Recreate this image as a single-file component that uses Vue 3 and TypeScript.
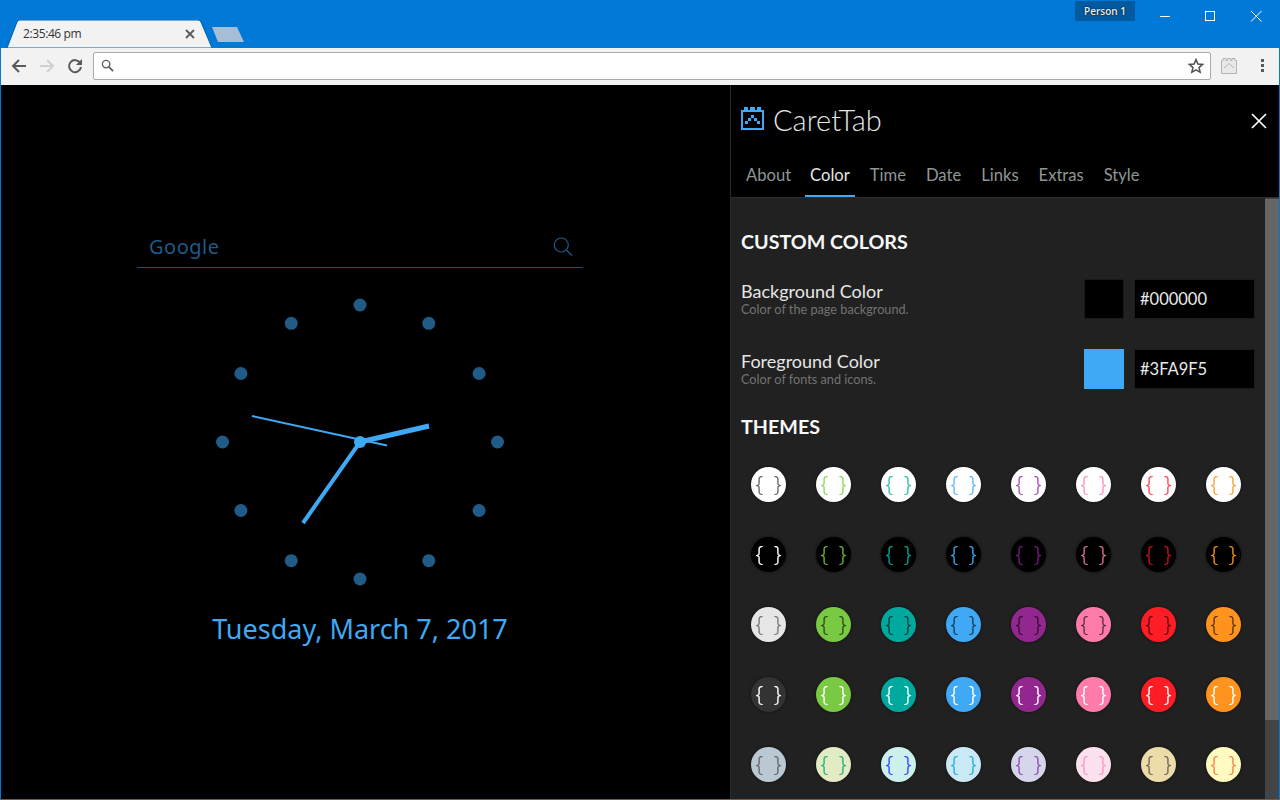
<script setup lang="ts">
const tabs = ['About', 'Color', 'Time', 'Date', 'Links', 'Extras', 'Style']

const dots = Array.from({ length: 12 }, (_, i) => {
  const a = (i * Math.PI) / 6
  return { x: 150 + 137.5 * Math.sin(a), y: 150 - 137 * Math.cos(a) }
})

const brights = ['#e6e6e6', '#7ac943', '#00a99d', '#3fa9f5', '#93278f', '#ff7bac', '#ff1d25', '#ff931e']

interface Theme { bg: string; fg: string }

const themes: Theme[] = [
  ...['#666666', '#8cd860', '#2dbfae', '#5fb8fa', '#a64db5', '#ff8fc2', '#ff4352', '#ffa133'].map((fg) => ({ bg: '#ffffff', fg })),
  ...['#ffffff', '#6cbb3c', '#00a99d', '#3fa9f5', '#7a1f80', '#e0709c', '#d3121c', '#f7931e'].map((fg) => ({ bg: '#000000', fg })),
  ...brights.map((bg) => ({ bg, fg: bg === '#e6e6e6' ? '#777777' : 'rgba(0,0,0,.62)' })),
  ...['#333333', ...brights.slice(1)].map((bg) => ({ bg, fg: '#ffffff' })),
  { bg: '#b9c8d2', fg: '#666666' },
  { bg: '#e2ebc3', fg: '#22b573' },
  { bg: '#ccf1ec', fg: '#3344ff' },
  { bg: '#c9e9f4', fg: '#29abe2' },
  { bg: '#d5d5eb', fg: '#8a50b0' },
  { bg: '#fbe0ee', fg: '#f79ac0' },
  { bg: '#ecdcaa', fg: '#736357' },
  { bg: '#fffabf', fg: '#f98050' },
]
</script>

<template>
  <div class="window">
    <header class="titlebar">
      <div class="tab">
        <svg class="tab-shape" width="205" height="28" viewBox="0 0 205 28">
          <path d="M0 28 L10 2 Q11 0 13 0 L191 0 Q193 0 194 2 L205 28 Z" fill="#f2f2f2" stroke="#0060ac" stroke-width="1" />
        </svg>
        <span class="tab-title">2:35:46 pm</span>
        <svg class="tab-close" width="10" height="10" viewBox="0 0 10 10">
          <path d="M1 1 L9 9 M9 1 L1 9" stroke="#5a5a5a" stroke-width="1.8" fill="none" />
        </svg>
      </div>
      <svg class="newtab" width="33" height="16" viewBox="0 0 33 16">
        <path d="M0 0 H25 L32 15 H6 Z" fill="#a5bed6" />
      </svg>
      <div class="title-spacer"></div>
      <div class="person">Person 1</div>
      <div class="winctl">
        <svg width="46" height="30" viewBox="0 0 46 30"><path d="M19 15.5 H29" stroke="#fff" fill="none" /></svg>
        <svg width="46" height="30" viewBox="0 0 46 30"><rect x="18.5" y="10.5" width="9" height="9" stroke="#fff" fill="none" /></svg>
        <svg width="46" height="30" viewBox="0 0 46 30"><path d="M18 10 L28.5 20.5 M28.5 10 L18 20.5" stroke="#fff" fill="none" /></svg>
      </div>
    </header>

    <div class="toolbar">
      <div class="tb-btn">
        <svg width="16" height="16" viewBox="0 0 16 16"><path d="M15 8 H2 M8 2 L2 8 L8 14" stroke="#5a5a5a" stroke-width="2" fill="none" /></svg>
      </div>
      <div class="tb-btn">
        <svg width="16" height="16" viewBox="0 0 16 16"><path d="M1 8 H14 M8 2 L14 8 L8 14" stroke="#d0d0d0" stroke-width="2" fill="none" /></svg>
      </div>
      <div class="tb-btn">
        <svg width="16" height="16" viewBox="0 0 16 16">
          <path d="M13.2 5 A6 6 0 1 0 14 9" stroke="#5a5a5a" stroke-width="2" fill="none" />
          <path d="M15 1 V7 H9 Z" fill="#5a5a5a" />
        </svg>
      </div>
      <div class="omnibox">
        <svg width="13" height="13" viewBox="0 0 14 14">
          <circle cx="5.5" cy="5.5" r="4" stroke="#5f5f5f" stroke-width="1.5" fill="none" />
          <path d="M8.5 8.5 L13 13" stroke="#5f5f5f" stroke-width="2" fill="none" />
        </svg>
        <div class="omni-spacer"></div>
        <svg width="16" height="16" viewBox="0 0 16 16">
          <path d="M8 1.6 L9.9 6 L14.7 6.4 L11 9.6 L12.2 14.3 L8 11.8 L3.8 14.3 L5 9.6 L1.3 6.4 L6.1 6 Z" stroke="#505050" stroke-width="1.5" fill="none" />
        </svg>
      </div>
      <div class="tb-ext">
        <svg width="16" height="16" viewBox="0 0 16 16">
          <path d="M.5 2.5 H2 V.5 H5 V2.5 H6.5 V.5 H9.5 V2.5 H11 V.5 H14 V2.5 H15.5 V15.5 H.5 Z" fill="#e8e8e8" stroke="#b4b4b4" />
          <path d="M3 10 L8 5.5 L13 10" stroke="#b4b4b4" fill="none" />
        </svg>
      </div>
      <div class="tb-menu">
        <i></i><i></i><i></i>
      </div>
    </div>

    <div class="content">
      <main class="page">
        <div class="search">
          <span class="search-label">Google</span>
          <svg width="20" height="20" viewBox="0 0 20 20">
            <circle cx="8.3" cy="8" r="7" stroke="#1f5a88" stroke-width="1.2" fill="none" />
            <path d="M13.3 13 L19 18.5" stroke="#1f5a88" stroke-width="1.2" fill="none" />
          </svg>
        </div>
        <svg class="clock" width="300" height="300" viewBox="0 0 300 300">
          <circle v-for="(d, i) in dots" :key="i" :cx="d.x" :cy="d.y" r="6.5" fill="#215b88" />
          <line x1="150" y1="150" x2="219" y2="134" stroke="#3fa9f5" stroke-width="5" />
          <line x1="150" y1="150" x2="93" y2="231" stroke="#3fa9f5" stroke-width="4" />
          <line x1="42" y1="124" x2="177" y2="153.5" stroke="#3fa9f5" stroke-width="2" />
          <circle cx="150" cy="150" r="6" fill="#3fa9f5" />
        </svg>
        <div class="date">Tuesday, March 7, 2017</div>
      </main>

      <aside class="panel">
        <div class="panel-head">
          <div class="brand">
            <svg class="logo" width="23" height="23" viewBox="0 0 23 23">
              <path d="M0 3 H3 V0 H7 V3 H9 V0 H14 V3 H16 V0 H20 V3 H23 V23 H0 Z M2 5 V21 H21 V5 Z" fill="#3fa9f5" fill-rule="evenodd" />
              <path d="M10 8 H13 V11 H10 Z M7 11 H10 V14 H7 Z M13 11 H16 V14 H13 Z M4 14 H7 V17 H4 Z M16 14 H19 V17 H16 Z" fill="#3fa9f5" />
            </svg>
            <span class="brand-name">CaretTab</span>
            <svg class="panel-close" width="16" height="16" viewBox="0 0 16 16">
              <path d="M1 1 L15 15 M15 1 L1 15" stroke="#fff" stroke-width="1.7" fill="none" />
            </svg>
          </div>
          <nav class="tabs">
            <span v-for="t in tabs" :key="t" class="nav-tab" :class="{ active: t === 'Color' }">{{ t }}</span>
          </nav>
        </div>

        <div class="panel-body">
          <div class="panel-scroll">
            <h2 class="h-custom">CUSTOM COLORS</h2>

            <div class="color-row first">
              <div class="labels">
                <div class="label">Background Color</div>
                <div class="sub">Color of the page background.</div>
              </div>
              <div class="swatch black"></div>
              <div class="hex">#000000</div>
            </div>

            <div class="color-row">
              <div class="labels">
                <div class="label">Foreground Color</div>
                <div class="sub">Color of fonts and icons.</div>
              </div>
              <div class="swatch blue"></div>
              <div class="hex">#3FA9F5</div>
            </div>

            <h2 class="h-themes">THEMES</h2>

            <div class="theme-grid">
              <div v-for="(t, i) in themes" :key="i" class="theme-cell">
                <div class="theme" :style="{ background: t.bg, color: t.fg }">{ }</div>
              </div>
            </div>
          </div>
          <div class="scrollbar"><div class="thumb"></div></div>
        </div>
      </aside>
    </div>
  </div>
</template>

<style>
html, body { margin: 0; background: #000; }
</style>

<style scoped>
.window {
  box-sizing: border-box;
  width: 1280px;
  height: 800px;
  border: 1px solid #0078d7;
  display: flex;
  flex-direction: column;
  overflow: hidden;
  background: #000;
}
.titlebar {
  height: 47px;
  flex: none;
  background: #0078d7;
  display: flex;
  align-items: flex-start;
  padding-left: 6px;
}
.tab {
  position: relative;
  width: 205px;
  height: 28px;
  margin-top: 19px;
  display: flex;
  align-items: center;
  justify-content: space-between;
  padding: 0 17px 0 16px;
  box-sizing: border-box;
  flex: none;
}
.tab-shape { position: absolute; left: 0; top: 0; }
.tab-title {
  position: relative;
  font: 12px/14px "Open Sans", "Noto Sans", sans-serif;
  letter-spacing: -.4px;
  color: #333;
}
.tab-close { position: relative; }
.newtab { margin-top: 26px; flex: none; }
.title-spacer { flex: 1; }
.person {
  width: 60px;
  height: 20px;
  background: #045a9e;
  color: #eee;
  font: 600 10px/20px "Open Sans", "Noto Sans", sans-serif;
  text-align: center;
  text-shadow: 0 0 2px #000;
  margin-right: 6px;
}
.winctl { display: flex; }
.winctl svg { display: block; }
.toolbar {
  height: 37px;
  flex: none;
  background: #f2f2f2;
  display: flex;
  align-items: center;
  padding: 0 2px 2px 4px;
  box-sizing: border-box;
}
.tb-btn {
  width: 28px;
  height: 28px;
  display: flex;
  align-items: center;
  justify-content: center;
  flex: none;
}
.omnibox {
  flex: 1;
  height: 28px;
  margin-left: 4px;
  box-sizing: border-box;
  background: #fff;
  border: 1px solid #a9a9a9;
  border-radius: 2px;
  display: flex;
  align-items: center;
  padding: 0 6px 0 7px;
}
.omni-spacer { flex: 1; }
.tb-ext {
  width: 36px;
  display: flex;
  justify-content: center;
  flex: none;
}
.tb-menu {
  width: 30px;
  display: flex;
  flex-direction: column;
  align-items: center;
  gap: 2px;
  flex: none;
}
.tb-menu i { width: 3px; height: 3px; background: #5a5a5a; display: block; }
.content { flex: 1; display: flex; min-height: 0; }
.page {
  width: 729px;
  flex: none;
  box-sizing: border-box;
  padding: 141px 11px 0 0;
  display: flex;
  flex-direction: column;
  align-items: center;
}
.search {
  width: 446px;
  height: 42px;
  box-sizing: border-box;
  border-bottom: 1px solid #1e4f75;
  display: flex;
  align-items: center;
  justify-content: space-between;
  padding: 0 10px 0 12px;
  flex: none;
}
.search-label {
  font: 20px/26px "Noto Sans", sans-serif;
  color: #1f5a88;
  letter-spacing: .5px;
}
.clock { display: block; margin-top: 24px; flex: none; }
.date {
  margin-top: 17px;
  font: 27px/40px "Noto Sans", sans-serif;
  color: #3fa9f5;
  white-space: nowrap;
}
.panel {
  flex: 1;
  min-width: 0;
  box-sizing: border-box;
  border-left: 1px solid #2a2a2a;
  display: flex;
  flex-direction: column;
  background: #212121;
}
.panel-head {
  height: 113px;
  flex: none;
  box-sizing: border-box;
  background: #000;
  border-bottom: 1px solid #2c2c2c;
  display: flex;
  flex-direction: column;
}
.brand {
  height: 68px;
  display: flex;
  align-items: center;
  padding: 0 12px 0 10px;
  flex: none;
}
.logo { flex: none; margin-top: -2px; }
.brand-name {
  margin-left: 9px;
  padding-top: 2px;
  font: 300 29px/36px Lato, sans-serif;
  color: #e6e6e6;
  flex: 1;
}
.panel-close { flex: none; margin-top: 3px; }
.tabs { display: flex; padding-left: 10px; gap: 10px; flex: 1; }
.nav-tab {
  padding: 11px 5px 0;
  font: 400 16.6px/22px Lato, sans-serif;
  color: #8f9696;
  box-sizing: border-box;
  height: 44px;
  border-bottom: 2px solid transparent;
}
.nav-tab:first-child { margin-right: -1px; }
.nav-tab.active {
  color: #e4e4e4;
  border-bottom-color: #3fa9f5;
}
.panel-body { flex: 1; min-height: 0; display: flex; }
.panel-scroll {
  flex: 1;
  min-width: 0;
  overflow: hidden;
  box-sizing: border-box;
  padding: 0 10px 0 10px;
}
.h-custom, .h-themes {
  margin: 0;
  font: 700 19.7px/24px Lato, sans-serif;
  color: #f8f8f8;
}
.h-custom { margin-top: 32px; }
.color-row {
  display: flex;
  align-items: center;
  height: 40px;
  margin-top: 30px;
}
.color-row.first { margin-top: 25px; }
.labels { flex: 1; min-width: 0; }
.label {
  font: 400 18px/20px Lato, sans-serif;
  color: #e6e6e6;
}
.sub {
  font: 12.7px/16px Lato, sans-serif;
  color: #737373;
}
.swatch { width: 40px; height: 40px; box-sizing: border-box; flex: none; }
.swatch.black { background: #000; border: 1px solid #1a1a1a; }
.swatch.blue { background: #3fa9f5; }
.hex {
  width: 121px;
  height: 40px;
  margin-left: 10px;
  box-sizing: border-box;
  flex: none;
  background: #000;
  border: 1px solid #1c1c1c;
  padding-left: 5px;
  color: #eaeaea;
  font: 16.5px/38px Lato, sans-serif;
}
.h-themes { margin-top: 26px; }
.theme-grid {
  display: grid;
  grid-template-columns: repeat(8, 65px);
  grid-auto-rows: 70px;
  margin: 10px 0 0 -5px;
}
.theme-cell { display: flex; align-items: center; justify-content: center; }
.theme {
  width: 35px;
  height: 35px;
  border-radius: 50%;
  box-shadow: 0 0 3px rgba(0, 0, 0, .6);
  text-align: center;
  font: 300 22px/32px "Open Sans", sans-serif;
  word-spacing: 5px;
  white-space: pre;
  -webkit-text-stroke: .25px currentColor;
  will-change: opacity;
}
.scrollbar {
  width: 14px;
  flex: none;
  background: #444;
}
.thumb { height: 521px; margin-top: 1px; background: #666; }
</style>
